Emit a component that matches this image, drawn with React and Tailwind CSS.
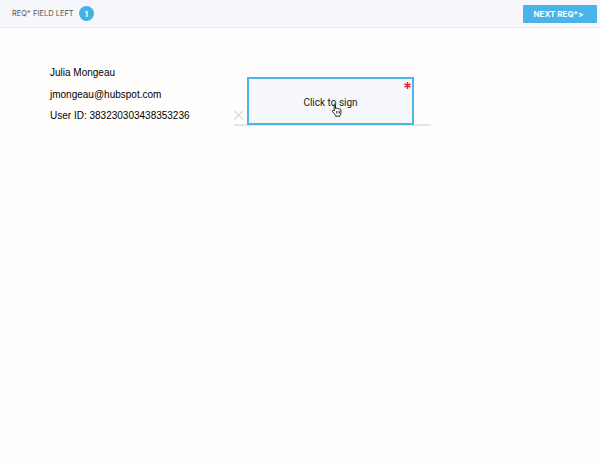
const HandCursor = () => (
  <svg width="12" height="14" viewBox="0 0 12 14" className="absolute left-[82px] top-[24px]">
    <path
      d="M3.2 1.6c0-.8 1.3-.8 1.3 0v4l.4-.2c.5-.3 1-.1 1.2.2.4-.3 1-.2 1.3.2.4-.3 1.1-.1 1.3.3.5-.2 1.2.1 1.2.8v2.900c0 1.200-.5 1.800-.9 2.500v.9H4.600v-.9C3.700 11.300 2.700 10 1.500 8.500c-.5-.7.2-1.500.9-1.100l.8.600V1.600z"
      fill="#fff"
      stroke="#222"
      strokeWidth="1"
      strokeLinejoin="round"
    />
    <path d="M5.500 8v2.500M7 8v2.500M8.500 8v2.500" stroke="#222" strokeWidth=".7" />
  </svg>
);

const App = () => {
  return (
    <div className="flex h-[463px] w-[600px] flex-col overflow-hidden bg-[#fffefc] font-['Liberation_Sans',Arial,sans-serif] text-black">
      <header className="flex h-[28px] items-center justify-between border-b border-[#e8ebf0] bg-[#f5f7fa] pl-[12px] pr-[3px]">
        <div className="flex items-center gap-[5px]">
          <span className="font-['Inter',sans-serif] text-[7.500px] text-[#555]">
            REQ<span className="text-[#e0313a]">*</span> FIELD LEFT
          </span>
          <span className="flex h-[15px] w-[15px] items-center justify-center rounded-full bg-[#45b0e6] font-['Inter',sans-serif] text-[8px] font-bold text-white">
            1
          </span>
        </div>
        <button className="h-[18px] w-[74px] rounded-[1px] bg-[#4ab3e8] pr-[3px] font-['Inter',sans-serif] text-[8px] font-bold text-white">
          NEXT REQ*&gt;
        </button>
      </header>
      <main className="flex items-start pl-[50px]">
        <div className="flex w-[184px] flex-col gap-[10px] pt-[39px] text-[10px] leading-[11.500px]">
          <p>Julia Mongeau</p>
          <p>jmongeau@hubspot.com</p>
          <p>User ID: 383230303438353236</p>
        </div>
        <div className="mt-[49px] flex w-[197px] items-end border-b-2 border-[#e5e5e5]">
          <svg width="13" height="13" viewBox="0 0 13 13" className="mb-[3px] shrink-0">
            <path d="M.5 3l8.500 8.500M9 3L.5 11.500" stroke="#d8d8d8" strokeWidth="1.200" />
          </svg>
          <div className="relative -mb-[1px] flex h-[48px] w-[167px] items-center justify-center border-2 border-[#4ab5e8] bg-[#f5f7fa] pt-[3px] font-['Roboto',sans-serif] text-[10px] text-[#222]">
            Click to sign
            <svg width="7" height="7" viewBox="0 0 7 7" className="absolute right-[1px] top-[3px]">
              <path d="M3.500 0v7M.5 1.800l6 3.400M6.500 1.800l-6 3.400" stroke="#e5202a" strokeWidth="1.400" />
            </svg>
            <HandCursor />
          </div>
        </div>
      </main>
    </div>
  );
};

export default App;
